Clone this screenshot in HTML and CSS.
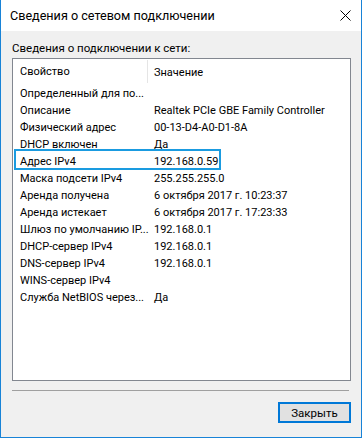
FILE: index.html
```html
<!DOCTYPE html>
<html lang="ru">
<head>
<meta charset="utf-8">
<link rel="stylesheet" href="styles.css">
</head>
<body>
<div class="window">
  <div class="titlebar">
    <span class="title">Сведения о сетевом подключении</span>
    <svg class="close" width="11" height="11" viewBox="0 0 11 11"><path d="M0.5 0.5 L10.5 10.5 M10.5 0.5 L0.5 10.5" stroke="#000" stroke-width="1" fill="none"/></svg>
  </div>
  <div class="content">
    <div class="label">Сведения о подключении к сети:</div>
    <div class="listbox">
      <div class="header">
        <div class="hcol c1">Свойство</div>
        <div class="hcol c2">Значение</div>
      </div>
      <div class="rows">
        <div class="row"><span class="c1">Определенный для по...</span><span class="c2"></span></div>
        <div class="row"><span class="c1">Описание</span><span class="c2">Realtek PCIe GBE Family Controller</span></div>
        <div class="row"><span class="c1">Физический адрес</span><span class="c2">00-13-D4-A0-D1-8A</span></div>
        <div class="row"><span class="c1">DHCP включен</span><span class="c2">Да</span></div>
        <div class="row marked"><span class="c1">Адрес IPv4</span><span class="c2">192.168.0.59</span><span class="mark"></span></div>
        <div class="row"><span class="c1">Маска подсети IPv4</span><span class="c2">255.255.255.0</span></div>
        <div class="row"><span class="c1">Аренда получена</span><span class="c2">6 октября 2017 г. 10:23:37</span></div>
        <div class="row"><span class="c1">Аренда истекает</span><span class="c2">6 октября 2017 г. 17:23:33</span></div>
        <div class="row"><span class="c1">Шлюз по умолчанию IP...</span><span class="c2">192.168.0.1</span></div>
        <div class="row"><span class="c1">DHCP-сервер IPv4</span><span class="c2">192.168.0.1</span></div>
        <div class="row"><span class="c1">DNS-сервер IPv4</span><span class="c2">192.168.0.1</span></div>
        <div class="row"><span class="c1">WINS-сервер IPv4</span><span class="c2"></span></div>
        <div class="row"><span class="c1">Служба NetBIOS через...</span><span class="c2">Да</span></div>
      </div>
    </div>
    <div class="sep"></div>
    <div class="footer">
      <button class="btn">Закрыть</button>
    </div>
  </div>
</div>
</body>
</html>
```
FILE: styles.css
```css
* { box-sizing: border-box; }
html, body { margin: 0; padding: 0; }
body {
  width: 362px;
  height: 438px;
  background: #f0f0f0;
  font-family: Roboto, "Liberation Sans", sans-serif;
  color: #000;
}
.window {
  width: 362px;
  height: 438px;
  border: 1px solid #1883d7;
  border-top: none;
  background: #f0f0f0;
  display: flex;
  flex-direction: column;
}
.titlebar {
  height: 31px;
  background: #fff;
  display: flex;
  align-items: center;
  justify-content: space-between;
  padding: 0 10px 0 9px;
}
.title {
  font-size: 12.6px;
  line-height: 16px;
  padding-top: 1px;
}
.close { display: block; margin-top: 0; }
.content {
  flex: 1;
  padding: 10px 10px 0 11px;
  display: flex;
  flex-direction: column;
}
.label {
  font-size: 11.5px;
  line-height: 15px;
}
.listbox {
  margin-top: 2px;
  height: 323px;
  border: 1px solid #828790;
  background: #fff;
  display: flex;
  flex-direction: column;
}
.header {
  height: 26px;
  display: flex;
  align-items: stretch;
}
.hcol {
  font-size: 11px;
  display: flex;
  align-items: center;
}
.header .c1 {
  width: 135px;
  padding-left: 7px;
  border-right: 1px solid #e5e5e5;
  margin: 1px 0 2px;
}
.header .c2 { padding-left: 6px; }
.rows { display: flex; flex-direction: column; }
.row {
  height: 17px;
  display: flex;
  align-items: center;
  font-size: 11px;
  position: relative;
  white-space: nowrap;
}
.row .c1 { width: 135px; padding-left: 7px; }
.row .c2 { padding-left: 6px; }
.mark {
  position: absolute;
  left: 1px;
  top: -4px;
  width: 207px;
  height: 21px;
  border: 2px solid #1a9be0;
}
.sep {
  margin-top: 9px;
  margin-right: 2px;
  height: 1px;
  background: #a0a0a0;
}
.footer {
  display: flex;
  justify-content: flex-end;
  margin-top: 11px;
}
.btn {
  width: 73px;
  height: 21px;
  border: 2px solid #0078d7;
  background: #e1e1e1;
  font-family: Roboto, "Liberation Sans", sans-serif;
  font-size: 11.5px;
  color: #000;
  padding: 0;
}
```
